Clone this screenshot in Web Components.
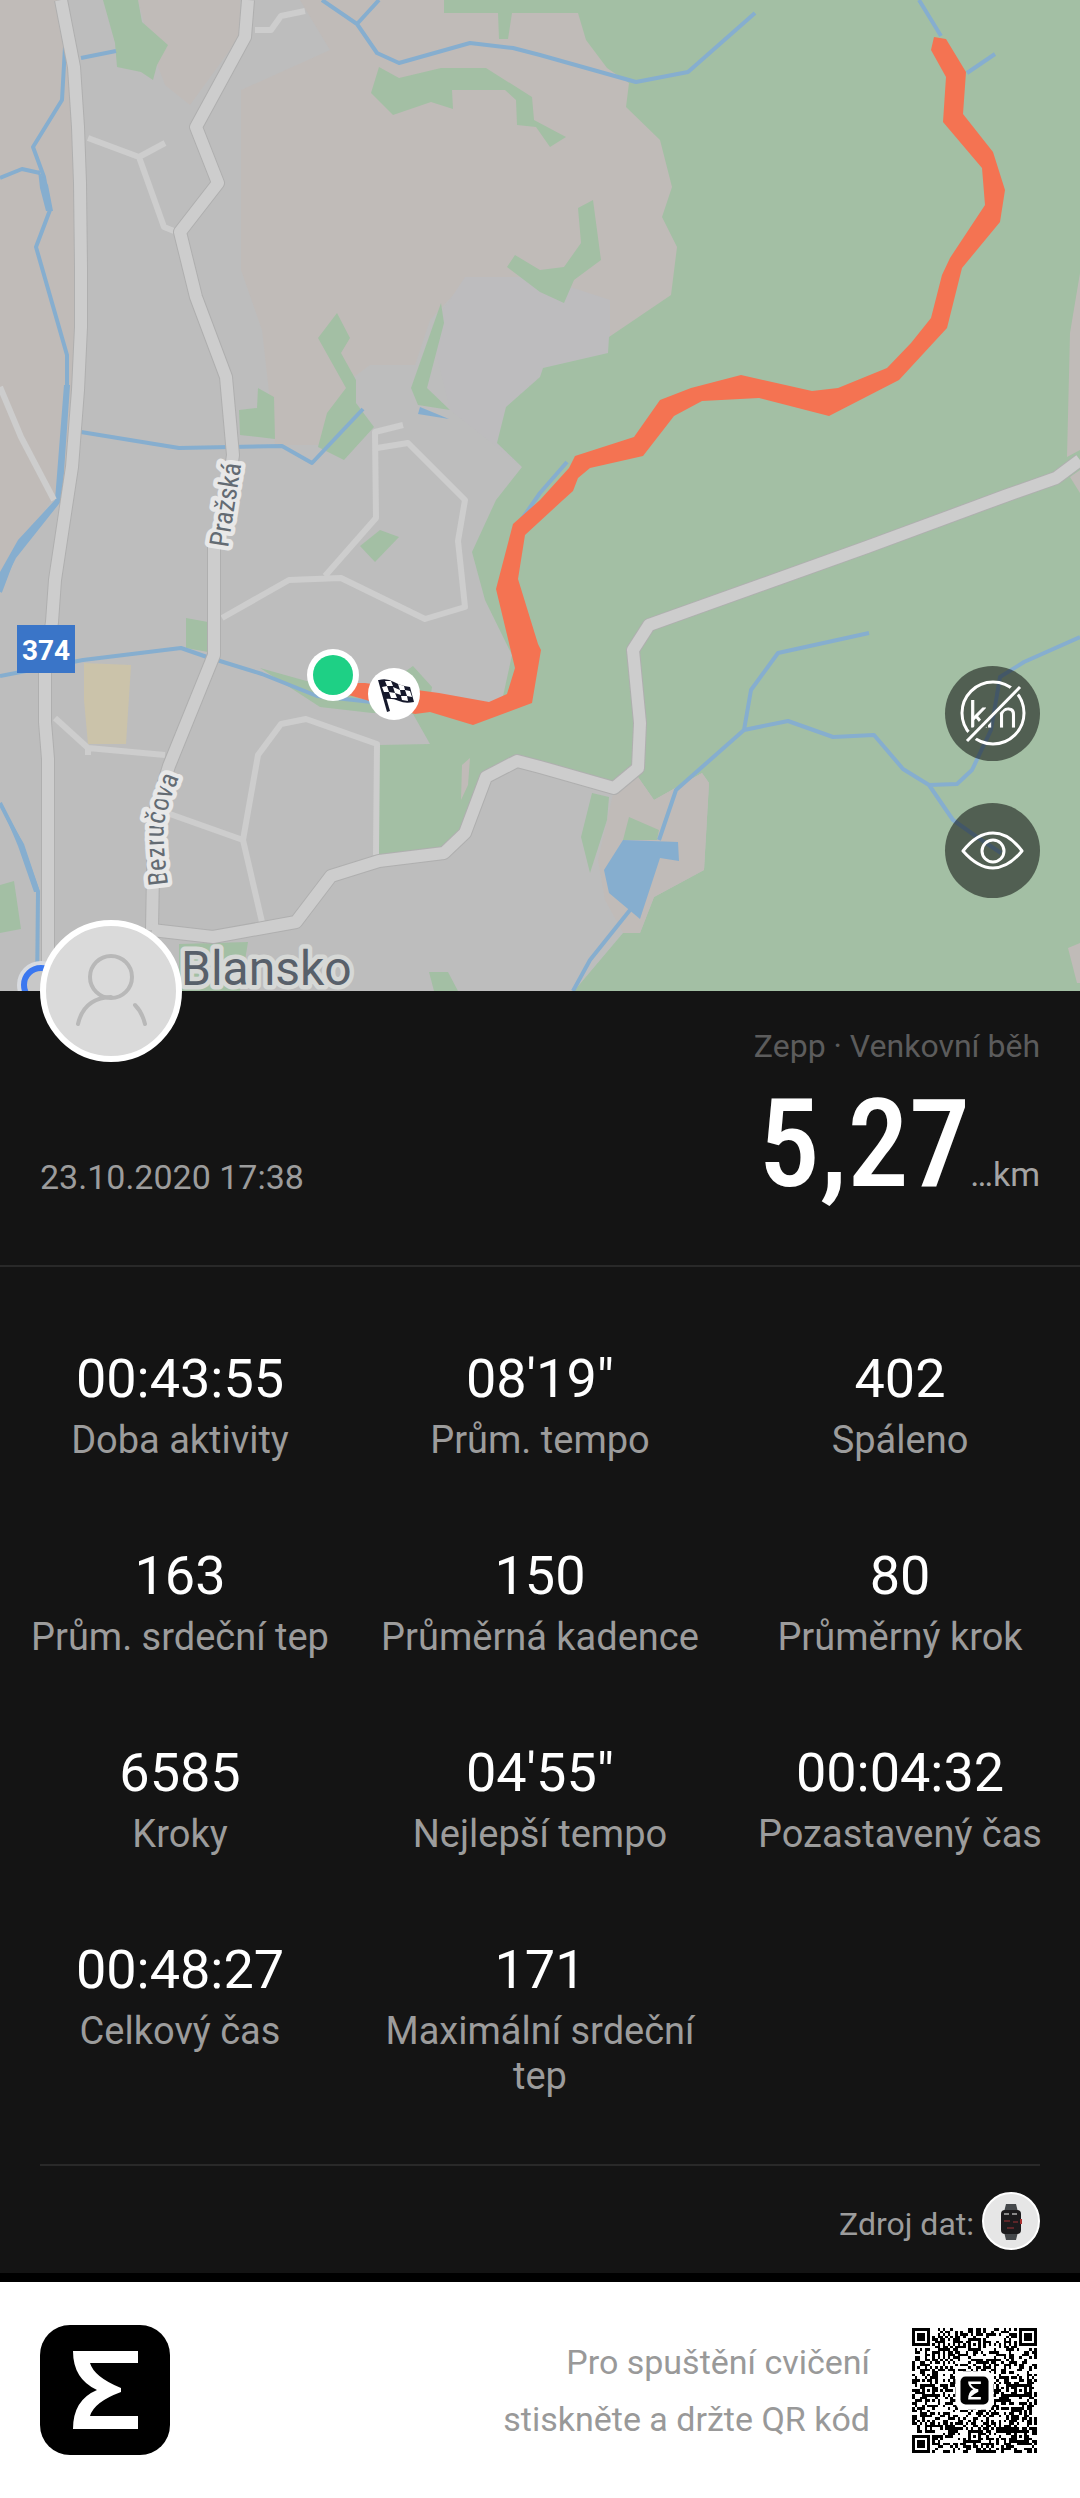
<!DOCTYPE html>
<html lang="cs">
<head>
<meta charset="utf-8">
<meta name="viewport" content="width=device-width, initial-scale=1">
<title>Zepp · Venkovní běh</title>
<style>
  body { margin: 0; background: #141414; color: #fff; font-family: Roboto, "Liberation Sans", sans-serif; }
</style>
</head>
<body>
<workout-share></workout-share>

<template id="t-share">
  <style>
    :host { display: block; background: #141414; }
    .grid { display: grid; grid-template-columns: repeat(3, 1fr); row-gap: 81px; padding: 80px 0 65px; }
  </style>
  <route-map></route-map>
  <workout-head>
    <time slot="date" datetime="2020-10-23T17:38">23.10.2020 17:38</time>
    <span slot="kind">Zepp · Venkovní běh</span>
    <span slot="value">5,27</span>
    <span slot="unit">…km</span>
  </workout-head>
  <main class="grid">
    <stat-cell>00:43:55<span slot="label">Doba aktivity</span></stat-cell>
    <stat-cell>08'19"<span slot="label">Prům. tempo</span></stat-cell>
    <stat-cell>402<span slot="label">Spáleno</span></stat-cell>
    <stat-cell>163<span slot="label">Prům. srdeční tep</span></stat-cell>
    <stat-cell>150<span slot="label">Průměrná kadence</span></stat-cell>
    <stat-cell>80<span slot="label">Průměrný krok</span></stat-cell>
    <stat-cell>6585<span slot="label">Kroky</span></stat-cell>
    <stat-cell>04'55"<span slot="label">Nejlepší tempo</span></stat-cell>
    <stat-cell>00:04:32<span slot="label">Pozastavený čas</span></stat-cell>
    <stat-cell>00:48:27<span slot="label">Celkový čas</span></stat-cell>
    <stat-cell>171<span slot="label">Maximální srdeční tep</span></stat-cell>
  </main>
  <data-source>Zdroj dat:</data-source>
  <share-footer>
    <span>Pro spuštění cvičení</span>
    <span>stiskněte a držte QR kód</span>
  </share-footer>
</template>

<template id="t-map">
  <style>
    :host { display: block; position: relative; overflow: hidden; }
    .map { display: block; width: 100%; height: auto; }
    .tools { position: absolute; right: 40px; bottom: 93px; display: flex; flex-direction: column; gap: 42px; }
    button { width: 95px; height: 95px; padding: 0; border: 0; border-radius: 50%; background: rgba(0,0,0,.5); display: block; }
    button svg { display: block; width: 100%; height: 100%; }
    .green { fill: #a3bfa4; } .water { fill: #86aecf; } .field { fill: #c0bbb8; }
    .stream { fill: none; stroke: #86aecf; stroke-width: 4; stroke-linejoin: round; }
    .minor { fill: none; stroke: #cdcdcd; stroke-width: 6; stroke-linejoin: round; }
    .edge { fill: none; stroke: #afafaf; stroke-width: 14; stroke-linejoin: round; }
    .road { fill: none; stroke: #cdcdcd; stroke-width: 12; stroke-linejoin: round; }
    text { font-family: Roboto, "Liberation Sans", sans-serif; }
    .label { fill: #636b73; stroke: #e8e8e8; stroke-width: 9; stroke-linejoin: round; paint-order: stroke; }
    .street { font-family: "Roboto Condensed", Roboto, sans-serif; font-size: 27px; }
    .town { font-size: 48px; fill: #58606a; stroke: #d6d8d6; }
  </style>
  <svg class="map" viewBox="0 0 1080 991" role="img" aria-label="Mapa trasy">
    <defs>
      <g id="roads">
        <path d="M61 0L74 67L78 127L80 183L81 267L81 327L78 390L72 467L67 500L55 580L52 622L45 667L45 722L48 759V991"/>
        <path d="M248 0L245 37L196 127L218 183L180 232L196 297L226 377L233 455L225 510L214 544V655L169 766L154 815L152 930"/>
        <path d="M152 930L213 937L296 922L331 876L379 861L444 853L465 833L486 777L517 761L540 767L614 788L638 768L640 723L633 650L649 625L867 547L1005 496L1056 478L1080 460"/>
      </g>
      <path id="bez" d="M168 885Q162 838 164 823Q167 805 183 768"/>
    </defs>
    <rect width="1080" height="991" fill="#bdbdbd"/>
    <path class="field" d="M0 0H58L74 90L78 380L64 480L0 580ZM138 0H240V36L190 105L165 85L150 45ZM300 0H680V300L610 353L540 377L470 277L430 320L415 365H370L350 380L320 445H275L262 330L241 270V90L330 50Z"/>
    <path d="M465 277H540L610 300V353L540 377L506 407L497 443L522 467L450 410L430 330Z" fill="#bdbcbe"/>
    <path class="green" d="M444 0H1080V991H574L623 933H640L654 897L704 870L709 783L702 773L654 800L638 777L614 788L540 766L517 761L486 777L465 833L444 853L379 856V745L430 744L413 714L372 713L320 707L260 668L310 682L365 700L413 666L432 687L430 700L500 710L512 655L485 600L472 552L496 500L522 467L497 443L506 407L540 377L543 368L608 353L609 337L671 295L677 247L662 217L672 187L660 140L626 107L629 83L607 68L586 40L578 13H512L508 39H499L498 13H444Z"/>
    <path class="field" d="M614 790L638 777L654 800L702 773L709 783L704 870L654 897L640 933H623L605 900L598 860ZM1080 273L1070 333L1067 457L1080 450ZM1070 477L1080 470V493ZM1080 943L1068 948L1077 983H1080ZM462 765L470 758L468 785L461 800Z"/>
    <path class="green" d="M103 0H138L142 22L168 45L157 65L153 80L141 72L117 67L115 43ZM379 67L399 78L441 68H486L532 97L534 120L566 137L550 147L536 127L517 125L516 100L505 90L452 90L453 109L431 102L393 115L371 93ZM515 255L540 270L564 267L581 243L578 208L593 200L601 260L574 280L564 303L540 292L507 267ZM337 313L350 338L341 353L356 380V403L374 427L344 460L318 447L327 413L346 388L318 338ZM441 303L444 323L427 388L450 410L418 405L411 388ZM258 388L274 397L275 439L240 435L239 410L257 408ZM380 530L399 537L375 562L360 546ZM186 618L208 622V652L186 648ZM0 885L14 881L21 929L0 933ZM179 944L248 942L240 991H179ZM429 972H448L458 991H434ZM592 793L609 797L607 820L590 873L581 837ZM629 817L659 830L657 840H623Z"/>
    <path d="M84 663L131 665L126 744H88L84 700Z" fill="#cbc3aa"/>
    <path class="stream" d="M65 47L62 100L33 147L44 177L50 210L36 247L67 355V390L59 500L14 555L0 592M0 178L22 169L40 173M81 58L116 51M81 432L179 448L282 446L312 463L363 409M322 0L357 24L379 0M357 24L377 53L399 63L470 43L513 48L540 55L636 82L688 72L755 13M919 0L941 36M967 73L995 54M567 462L540 493L517 526M0 676L83 660L181 648L207 657L262 674L317 696L372 702M0 803L21 844L38 892L37 991M869 633L778 653L751 690L744 730L788 721L833 737L874 735L903 769L929 785L957 784L972 770L991 730L1000 677L1024 662L1080 637M929 785L953 820L977 837L1001 853M744 730L676 790L659 840M630 910L590 960L573 991"/>
    <path class="water" d="M623 840L678 842L679 861L660 858L640 919L609 893L604 870ZM420 407L449 419L418 414ZM64 385H70L62 500L16 558L0 590V572L18 540L55 500ZM38 170L48 185L53 211L46 211L40 188ZM0 803L24 844L40 892H34L18 846Z"/>
    <path class="minor" d="M255 30H271L281 16L305 11M88 138L139 157L165 143M139 157L164 227L174 231M0 387L21 437L54 500M403 425L375 432L376 518L325 576M222 618L289 580L341 578L425 619L465 607L458 541L465 500L408 443L377 448M55 718L88 748L165 755M88 748V755M167 813L243 840L258 755L281 724L306 719L377 744L376 855M243 840L262 922"/>
    <use href="#roads" class="edge"/>
    <use href="#roads" class="road"/>
    <path fill="#f47352" d="M934 37L931 50L946 77L943 122L982 168L985 205L950 258L942 275L931 318L911 343L887 368L838 388L812 391L741 375L691 388L660 400L634 437L575 456L569 468L540 500L513 524L496 589L515 668L507 694L489 702L439 693L365 683H345V694L415 714L430 712L473 725L532 703L541 650L538 644L518 579L525 535L563 500L573 491L578 478L590 468L643 456L674 416L702 401L759 398L829 416L899 380L947 328L962 268L1000 222L1005 190L993 152L963 114L966 72L946 39Z"/>
    <rect x="17" y="625" width="58" height="48" fill="#3a75c8"/>
    <text x="46" y="660" text-anchor="middle" font-size="28" font-weight="700" fill="#fff">374</text>
    <text class="label street" transform="translate(228 548) rotate(-81)">Pražská</text>
    <text class="label street"><textPath href="#bez">Bezručova</textPath></text>
    <text class="label town" x="181" y="985">Blansko</text>
    <circle cx="41" cy="985" r="24" fill="#d8dbe0"/>
    <circle cx="41" cy="985" r="17" fill="#c8c8c8" stroke="#3b78f0" stroke-width="6"/>
    <circle cx="333" cy="675" r="26" fill="#fff"/>
    <circle cx="333" cy="675" r="20" fill="#1ed085"/>
    <circle cx="394" cy="694" r="26" fill="#fff"/>
    <path d="M378 680L381 680L390 711L387 712Z" fill="#15182b"/>
    <path d="M379 680Q387 678 394 682T410 687L414 702Q405 704 399 701T384 699Z" fill="#15182b"/>
    <path fill="#fff" d="M385 681L391 681L393 686L387 686ZM398 684L404 686L405 690L400 690ZM382 687L387 686L389 692L384 692ZM393 687L400 690L401 695L395 693ZM405 690L410 691L412 697L407 696ZM389 692L395 693L397 698L391 698ZM401 696L407 696L408 701L402 700Z"/>
  </svg>
  <div class="tools">
    <button type="button" aria-label="Skrýt kilometry">
      <svg viewBox="0 0 95 95">
        <mask id="cut"><rect width="95" height="95" fill="#fff"/><path d="M17 80L78 16" stroke="#000" stroke-width="10"/></mask>
        <mask id="cut-text"><rect width="95" height="95" fill="#fff"/><path d="M17 80L78 16" stroke="#000" stroke-width="9"/><path d="M41 30H54V40L41 50Z"/></mask>
        <circle mask="url(#cut)" cx="48" cy="47" r="31" fill="none" stroke="#fff" stroke-width="3"/>
        <text mask="url(#cut-text)" x="48" y="61" text-anchor="middle" font-size="35" font-weight="300" fill="#fff" stroke="#fff">km</text>
        <path d="M22 75L75 21" stroke="#fff" stroke-width="3"/>
      </svg>
    </button>
    <button type="button" aria-label="Zobrazit mapu">
      <svg viewBox="0 0 95 95" fill="none" stroke="#fff" stroke-width="3" stroke-linejoin="round">
        <path d="M18 48Q32 30 48 30T77 48Q63 65 48 65T18 48Z"/>
        <circle cx="48" cy="48" r="11"/>
      </svg>
    </button>
  </div>
</template>

<template id="t-head">
  <style>
    :host { display: flex; justify-content: space-between; align-items: flex-end; position: relative; padding: 36px 40px 42px; border-bottom: 2px solid #292929; }
    .avatar { position: absolute; left: 40px; top: -71px; width: 142px; height: 142px; }
    .date { padding-bottom: 26px; font-size: 34px; line-height: 40px; color: #9c9c9c; }
    .right { display: flex; flex-direction: column; align-items: flex-end; }
    .kind { font-size: 32px; line-height: 38px; color: #5c5c5c; }
    .dist { display: flex; align-items: baseline; line-height: 158px; }
    .value { font-family: "Roboto Condensed", Roboto, sans-serif; font-weight: 500; font-size: 123px; }
    .unit { font-size: 34px; line-height: 40px; color: #a4a4a4; }
  </style>
  <svg class="avatar" viewBox="0 0 142 142" role="img" aria-label="Profil">
    <circle cx="71" cy="71" r="68" fill="#dadada" stroke="#fff" stroke-width="6"/>
    <g fill="none" stroke="#b8b8b8" stroke-width="4" stroke-linecap="round">
      <circle cx="71" cy="57" r="21"/><path d="M38 104Q44 78 71 77M95 85Q102 92 105 104"/>
    </g>
  </svg>
  <div class="date"><slot name="date"></slot></div>
  <div class="right">
    <div class="kind"><slot name="kind"></slot></div>
    <div class="dist"><div class="value"><slot name="value"></slot></div><div class="unit"><slot name="unit"></slot></div></div>
  </div>
</template>

<template id="t-stat">
  <style>
    :host { display: flex; flex-direction: column; gap: 8px; padding: 0 16px; text-align: center; }
    .value { font-size: 54px; line-height: 63px; color: #fff; }
    .label { font-size: 38px; line-height: 45px; color: #9c9c9c; }
  </style>
  <div class="value"><slot></slot></div>
  <div class="label"><slot name="label"></slot></div>
</template>

<template id="t-source">
  <style>
    :host { display: flex; align-items: center; justify-content: flex-end; gap: 8px; margin: 0 40px; padding: 26px 0 23px; border-top: 2px solid #292929; font-size: 32px; line-height: 38px; color: #9c9c9c; }
    .text { padding-top: 6px; }
    svg { display: block; width: 58px; height: 58px; }
  </style>
  <div class="text"><slot></slot></div>
  <svg viewBox="0 0 58 58" role="img" aria-label="Hodinky">
    <circle cx="29" cy="29" r="28" fill="#e6e6e6" stroke="#fff" stroke-width="2"/>
    <path d="M24 12H34L36 20H22ZM22 40H36L34 48H24Z" fill="#45484b"/>
    <rect x="19" y="18" width="20" height="24" rx="4" fill="#1b1a1c"/>
    <rect x="38" y="27" width="2" height="5" fill="#a33"/>
    <path d="M22 22H27M30 22H35" stroke="#888" stroke-width="2"/><path d="M22 29H28M31 30H36M25 36H32" stroke="#5c2528" stroke-width="2"/>
  </svg>
</template>

<template id="t-footer">
  <style>
    :host { display: flex; align-items: center; border-top: 9px solid #000; background: #fff; padding: 43px 43px 43px 40px; color: #999; }
    .logo { width: 130px; height: 130px; display: block; }
    .text { flex: 1; display: flex; flex-direction: column; align-items: flex-end; padding: 2px 42px 0 0; font-size: 34px; line-height: 57px; }
    .qr { width: 125px; height: 125px; display: block; }
  </style>
  <svg class="logo" viewBox="0 0 130 130" role="img" aria-label="Zepp">
    <rect width="130" height="130" rx="30"/>
    <path d="M33 26H98V38H50Q54 52 81 63V67Q54 77 50 91H98V104H33Q33 75 57 65Q33 54 33 26Z" fill="#fff"/>
  </svg>
  <div class="text"><slot></slot></div>
  <svg class="qr" viewBox="0 0 49 49" shape-rendering="crispEdges" role="img" aria-label="QR kód">
    <path class="cells"/>
    <g shape-rendering="auto">
      <rect x="17" y="17" width="15" height="15" rx="3" fill="#fff"/>
      <rect x="19" y="19" width="11" height="11" rx="2"/>
      <path d="M22 21H27V22H23Q24 24 26 24V25Q24 26 23 27H27V28H22Q22 25 24 24Q22 23 22 21Z" fill="#fff"/>
    </g>
  </svg>
</template>

<script>
  class Base extends HTMLElement {
    constructor() {
      super();
      const t = document.getElementById(this.constructor.template);
      this.attachShadow({ mode: "open" }).append(t.content.cloneNode(true));
    }
  }
  const define = (name, template) =>
    customElements.define(name, class extends Base { static template = template; });

  define("route-map", "t-map");
  define("workout-head", "t-head");
  define("stat-cell", "t-stat");
  define("data-source", "t-source");

  class ShareFooter extends Base {
    static template = "t-footer";
    constructor() {
      super();
      this.shadowRoot.querySelector(".cells").setAttribute("d", this.cells(49));
    }
    // Finder squares, timing lines, alignment squares and a fixed data pattern.
    cells(n) {
      let seed = 20201023, d = "";
      const square = (x, y, cx, cy, r) => {
        const k = Math.max(Math.abs(x - cx), Math.abs(y - cy));
        return k > r ? null : r === 4 ? k === 3 || k < 2 : k !== 1;
      };
      const dark = (x, y) => {
        seed = (seed * 1103515245 + 12345) % 2147483648;
        const bit = seed / 2147483648 < 0.5;
        for (const [cx, cy] of [[3, 3], [n - 4, 3], [3, n - 4]]) {
          const s = square(x, y, cx, cy, 4);
          if (s !== null) return s;
        }
        for (const [cx, cy] of [[24, 6], [6, 24], [42, 24], [24, 42], [42, 42]]) {
          const s = square(x, y, cx, cy, 2);
          if (s !== null) return s;
        }
        if (x === 6) return y % 2 === 0;
        if (y === 6) return x % 2 === 0;
        return bit;
      };
      for (let y = 0; y < n; y++)
        for (let x = 0; x < n; x++)
          if (dark(x, y)) d += `M${x} ${y}h1v1h-1z`;
      return d;
    }
  }
  customElements.define("share-footer", ShareFooter);
  define("workout-share", "t-share");
</script>
</body>
</html>
